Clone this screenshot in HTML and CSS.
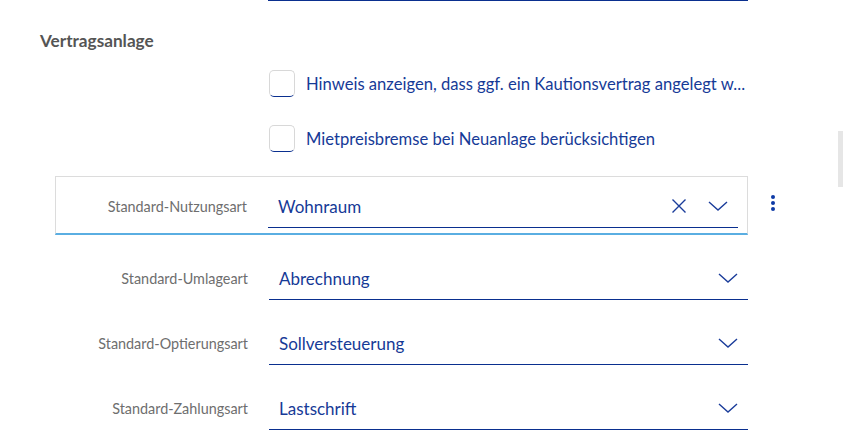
FILE: index.html
```html
<!DOCTYPE html>
<html lang="de">
<head>
<meta charset="utf-8">
<title>Vertragsanlage</title>
<link rel="stylesheet" href="styles.css">
</head>
<body>
<div class="page">
  <div class="prev-line"></div>
  <h2 class="section-title">Vertragsanlage</h2>

  <div class="checks">
    <label class="check-row">
      <span class="checkbox"></span>
      <span class="check-text">Hinweis anzeigen, dass ggf. ein Kautionsvertrag angelegt w...</span>
    </label>
    <label class="check-row">
      <span class="checkbox"></span>
      <span class="check-text">Mietpreisbremse bei Neuanlage berücksichtigen</span>
    </label>
  </div>

  <div class="fields">
    <div class="field-line">
      <div class="field active">
        <span class="field-label">Standard-Nutzungsart</span>
        <div class="select">
          <span class="select-value">Wohnraum</span>
          <svg class="icon-x" width="16" height="16" viewBox="0 0 16 16"><path d="M1.5 1.5 L14.5 14.5 M14.5 1.5 L1.5 14.5" stroke="#1a3c9a" stroke-width="1.4" fill="none"/></svg>
          <svg class="icon-chev" width="20" height="10" viewBox="0 0 20 10"><path d="M1 1 L10 9 L19 1" stroke="#1a3c9a" stroke-width="1.4" fill="none"/></svg>
        </div>
      </div>
      <div class="kebab"><span></span><span></span><span></span></div>
    </div>

    <div class="field-line">
      <div class="field">
        <span class="field-label">Standard-Umlageart</span>
        <div class="select">
          <span class="select-value">Abrechnung</span>
          <svg class="icon-chev" width="20" height="10" viewBox="0 0 20 10"><path d="M1 1 L10 9 L19 1" stroke="#1a3c9a" stroke-width="1.4" fill="none"/></svg>
        </div>
      </div>
    </div>

    <div class="field-line">
      <div class="field">
        <span class="field-label">Standard-Optierungsart</span>
        <div class="select">
          <span class="select-value">Sollversteuerung</span>
          <svg class="icon-chev" width="20" height="10" viewBox="0 0 20 10"><path d="M1 1 L10 9 L19 1" stroke="#1a3c9a" stroke-width="1.4" fill="none"/></svg>
        </div>
      </div>
    </div>

    <div class="field-line">
      <div class="field">
        <span class="field-label">Standard-Zahlungsart</span>
        <div class="select">
          <span class="select-value">Lastschrift</span>
          <svg class="icon-chev" width="20" height="10" viewBox="0 0 20 10"><path d="M1 1 L10 9 L19 1" stroke="#1a3c9a" stroke-width="1.4" fill="none"/></svg>
        </div>
      </div>
    </div>
  </div>
</div>
<div class="scroll-thumb"></div>
</body>
</html>
```

FILE: styles.css
```css
* { box-sizing: border-box; }
html, body {
  margin: 0;
  padding: 0;
  background: #ffffff;
  overflow: hidden;
}
body {
  font-family: Lato, "Noto Sans", sans-serif;
  width: 843px;
  height: 437px;
}
.page {
  padding: 0 0 0 40px;
}
.prev-line {
  margin-left: 228px;
  width: 480px;
  height: 1px;
  background: #0a2f8f;
}
.section-title {
  margin: 30px 0 0 0;
  font-size: 17.2px;
  line-height: 20px;
  font-weight: 700;
  color: #555555;
}
.checks {
  margin: 19px 0 0 229px;
  display: flex;
  flex-direction: column;
  gap: 28px;
}
.check-row {
  display: flex;
  align-items: center;
  gap: 11px;
  height: 27px;
}
.checkbox {
  width: 26px;
  height: 27px;
  border: 1px solid #d8d8d8;
  border-bottom: 1.5px solid #0a2f8f;
  border-radius: 5px;
  flex: none;
}
.check-text {
  font-size: 16.6px;
  color: #163a97;
  white-space: nowrap;
}
.fields {
  margin: 24px 0 0 15px;
}
.field-line {
  display: flex;
  align-items: stretch;
}
.field {
  width: 693px;
  display: flex;
  align-items: center;
  gap: 21px;
  padding: 22px 0 0 1px;
}
.field.active {
  border: 1px solid #dcdcdc;
  border-bottom: 2px solid #5aaee2;
  padding: 8px 9px 5px 0;
}
.field-label {
  width: 192px;
  text-align: right;
  font-size: 14.4px;
  color: #6e6e6e;
  white-space: nowrap;
}
.field.active .field-label { width: 191px; }
.select {
  flex: 1;
  height: 43px;
  border-bottom: 1px solid #0a2f8f;
  display: flex;
  align-items: center;
  padding: 0 10px 0 10px;
}
.select-value {
  flex: 1;
  font-size: 17px;
  color: #163a97;
}
.icon-x {
  margin-right: 21px;
  flex: none;
}
.icon-chev { flex: none; }
.kebab {
  width: 50px;
  display: flex;
  flex-direction: column;
  align-items: center;
  justify-content: center;
  gap: 2px;
  padding-bottom: 5px;
}
.kebab span {
  width: 4px;
  height: 4px;
  border-radius: 50%;
  background: #0d3aa6;
}
.scroll-thumb {
  position: fixed;
  right: 0;
  top: 131px;
  width: 5px;
  height: 56px;
  background: #e6e6e6;
}
```
